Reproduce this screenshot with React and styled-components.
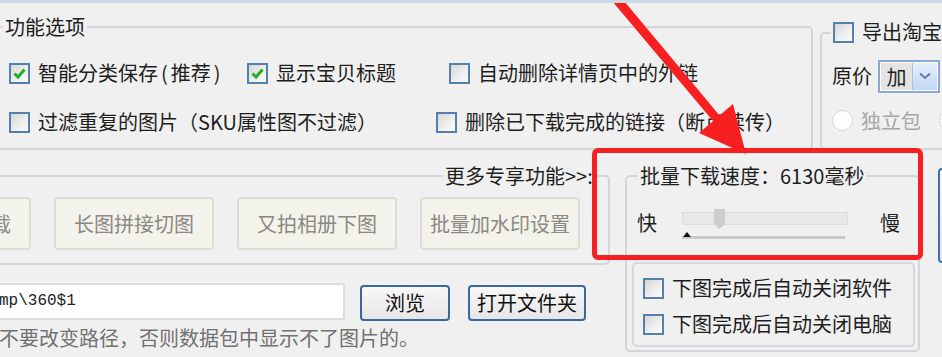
import styled, { createGlobalStyle } from 'styled-components'

const GlobalStyle = createGlobalStyle`
  html, body {
    margin: 0;
    padding: 0;
    background: #f0f0f0;
  }
  body {
    font-family: "Noto Sans CJK SC", "Noto Sans", sans-serif;
  }
`

const Page = styled.div`
  position: relative;
  width: 942px;
  height: 357px;
  box-sizing: border-box;
  overflow: hidden;
  background: #f0f0f0;
  border-top: 3px solid #cddae7;
  color: #1e1e1e;
  font-size: 20px;
  line-height: 22px;
`

const TopBand = styled.div`
  display: flex;
  align-items: flex-start;
  gap: 7px;
  margin-left: -4px;
`

const LowerBand = styled.div`
  display: flex;
  align-items: flex-start;
  margin-top: 15px;
`

const Group = styled.fieldset`
  margin: 0;
  min-width: 0;
  box-sizing: border-box;
  flex-shrink: 0;
  border: 2px solid #d6d4da;
  border-radius: 5px;
`

const Legend = styled.legend`
  padding: 0 2px;
  margin-left: ${p => p.$ml || 0}px;
  line-height: 22px;
  white-space: nowrap;
`

const OptionsGroup = styled(Group)`
  margin-top: 13px;
  width: 817px;
  padding: 24px 0 15px 11px;
`

const ExportGroup = styled(Group)`
  margin-top: 18px;
  width: 200px;
  height: 129px;
  padding: 14px 0 0 10px;
`

const MoreGroup = styled(Group)`
  padding: 10px 28px 13px 0;
`

const SpeedGroup = styled(Group)`
  margin-left: 15px;
  width: 295px;
  padding: 0 3px 3px 5px;
`

const LeftColumn = styled.div`
  margin-left: -4px;
  width: 614px;
  flex-shrink: 0;
`

const OptionList = styled.div`
  display: flex;
  flex-direction: column;
  gap: ${p => p.$gap}px;
`

const OptionRow = styled.div`
  display: flex;
  align-items: center;
  height: 22px;
`

const CheckItem = styled.label`
  display: flex;
  align-items: center;
  gap: 8px;
  flex-shrink: 0;
  width: ${p => (p.$w ? `${p.$w}px` : 'auto')};
  white-space: nowrap;
`

const Paren = styled.span`
  padding: 0 3px;
`

const Box = styled.span`
  display: inline-flex;
  align-items: center;
  justify-content: center;
  width: 21px;
  height: 21px;
  box-sizing: border-box;
  border: 2px solid #5580ab;
  background: linear-gradient(135deg, #d6d6d6 0%, #eeeeee 55%, #fbfbfb 100%);
  flex-shrink: 0;
`

function Checkbox({ checked }) {
  return (
    <Box>
      {checked && (
        <svg width="15" height="15" viewBox="0 0 15 15">
          <path d="M2.5 7.5 L6 11 L12.5 3.5" fill="none" stroke="#1fae24" strokeWidth="3" />
        </svg>
      )}
    </Box>
  )
}

const LegendCheck = styled.span`
  display: inline-flex;
  align-items: center;
  gap: 8px;
`

const PriceRow = styled.div`
  display: flex;
  align-items: center;
  height: 33px;
`

const Select = styled.div`
  display: flex;
  margin-left: 6px;
  width: 62px;
  height: 33px;
  box-sizing: border-box;
  border: 2px solid #8aaad3;
  background: #fff;
  padding: 1px;
`

const SelectValue = styled.span`
  width: 31px;
  background: #e3e3e3;
  text-align: center;
  line-height: 27px;
`

const SelectArrow = styled.span`
  flex: 1;
  display: flex;
  align-items: center;
  justify-content: center;
  background: linear-gradient(#e4eefc, #c3d7f4);
  border-left: 1px solid #a8c2e6;
`

const RadioRow = styled.div`
  display: flex;
  align-items: center;
  margin-top: 17px;
  height: 22px;
  color: #a6a6a6;
`

const Radio = styled.span`
  width: 21px;
  height: 21px;
  box-sizing: border-box;
  border-radius: 50%;
  border: 1px solid #d6d6d6;
  background: #fff;
  margin-right: 8px;
  margin-left: ${p => p.$ml || 0}px;
  flex-shrink: 0;
`

const ToolRow = styled.div`
  display: flex;
  justify-content: flex-end;
  gap: 23px;
`

const ToolButton = styled.div`
  flex-shrink: 0;
  width: 160px;
  height: 53px;
  box-sizing: border-box;
  display: flex;
  align-items: center;
  justify-content: center;
  border: 2px solid #dedcd4;
  border-radius: 4px;
  background: #f4f3eb;
  color: #8a8982;
`

const PathRow = styled.div`
  display: flex;
  align-items: flex-start;
  margin-top: 18px;
`

const PathBox = styled.div`
  margin-left: -51px;
  width: 400px;
  height: 37px;
  box-sizing: border-box;
  border: 2px solid #dddddd;
  background: #fff;
  padding-left: 4px;
  font-family: "Liberation Mono", "DejaVu Sans Mono", monospace;
  font-size: 16px;
  line-height: 33px;
  color: #222;
  white-space: nowrap;
`

const PushButton = styled.div`
  margin-top: 2px;
  margin-left: ${p => p.$ml}px;
  width: ${p => p.$w}px;
  height: 36px;
  box-sizing: border-box;
  display: flex;
  align-items: center;
  justify-content: center;
  border: 2px solid #3a679c;
  border-radius: 4px;
  background: linear-gradient(#f8f8f8, #e6e6e6);
  color: #111;
`

const Hint = styled.div`
  margin-top: 6px;
  margin-left: -17px;
  color: #717171;
  white-space: nowrap;
`

const SliderRow = styled.div`
  display: flex;
  align-items: flex-start;
  margin-top: 25px;
  padding-left: 5px;
`

const SpeedLabel = styled.span`
  width: 20px;
  margin-left: ${p => p.$ml || 0}px;
  line-height: 22px;
`

const Slider = styled.div`
  margin-left: 25px;
  width: 166px;
`

const Track = styled.div`
  position: relative;
  height: 13px;
  box-sizing: border-box;
  background: #e8e8e8;
  border: 1px solid #dcdcdc;
`

const Thumb = styled.div`
  position: absolute;
  left: 31px;
  top: -4px;
  width: 11px;
  height: 20px;
  background: #cdcdcd;
  clip-path: polygon(0 0, 100% 0, 100% 75%, 50% 100%, 0 75%);
`

const Ticks = styled.div`
  position: relative;
  margin-top: 11px;
  width: 163px;
  height: 3px;
  background: #c9c9c9;
  &::before {
    content: '';
    position: absolute;
    left: 1px;
    top: -4px;
    border-left: 4px solid transparent;
    border-right: 4px solid transparent;
    border-bottom: 5px solid #111;
  }
`

const InnerBox = styled.div`
  margin-top: 23px;
  height: 85px;
  box-sizing: border-box;
  border: 2px solid #d8d6db;
  border-radius: 5px;
  padding: 13px 0 0 9px;
`

const SideButton = styled.div`
  flex-shrink: 0;
  margin-left: 18px;
  margin-top: 3px;
  width: 40px;
  height: 95px;
  box-sizing: border-box;
  border: 2px solid #3d6fa8;
  border-radius: 4px;
  background: linear-gradient(#f8f8f8, #e6e6e6);
`

const Highlight = styled.div`
  position: absolute;
  left: 592px;
  top: 145px;
  width: 331px;
  height: 112px;
  box-sizing: border-box;
  border: 5px solid #f71f1f;
  border-radius: 6px;
  pointer-events: none;
`

const ArrowLayer = styled.svg`
  position: absolute;
  left: 0;
  top: -3px;
  pointer-events: none;
`

export default function App() {
  return (
    <>
      <GlobalStyle />
      <Page>
        <TopBand>
          <OptionsGroup>
            <Legend $ml={-6}>功能选项</Legend>
            <OptionList $gap={27}>
              <OptionRow>
                <CheckItem $w={238}><Checkbox checked /><span>智能分类保存<Paren>(</Paren>推荐<Paren>)</Paren></span></CheckItem>
                <CheckItem $w={202}><Checkbox checked />显示宝贝标题</CheckItem>
                <CheckItem><Checkbox />自动删除详情页中的外链</CheckItem>
              </OptionRow>
              <OptionRow>
                <CheckItem $w={427}><Checkbox />过滤重复的图片（SKU属性图不过滤）</CheckItem>
                <CheckItem><Checkbox />删除已下载完成的链接（断点续传）</CheckItem>
              </OptionRow>
            </OptionList>
          </OptionsGroup>
          <ExportGroup>
            <Legend $ml={-1}>
              <LegendCheck><Checkbox />导出淘宝数据包</LegendCheck>
            </Legend>
            <PriceRow>
              原价
              <Select>
                <SelectValue>加</SelectValue>
                <SelectArrow>
                  <svg width="12" height="8" viewBox="0 0 12 8">
                    <path d="M1 1.5 L6 6 L11 1.5" fill="none" stroke="#5a7fb0" strokeWidth="2" />
                  </svg>
                </SelectArrow>
              </Select>
            </PriceRow>
            <RadioRow>
              <Radio />独立包
              <Radio $ml={18} />合并
            </RadioRow>
          </ExportGroup>
        </TopBand>

        <LowerBand>
          <LeftColumn>
            <MoreGroup>
              <Legend $ml={445}>更多专享功能&gt;&gt;:</Legend>
              <ToolRow>
                <ToolButton>批量视频下载</ToolButton>
                <ToolButton>长图拼接切图</ToolButton>
                <ToolButton>又拍相册下图</ToolButton>
                <ToolButton>批量加水印设置</ToolButton>
              </ToolRow>
            </MoreGroup>
            <PathRow>
              <PathBox>D:\temp\360$1</PathBox>
              <PushButton $ml={15} $w={90}>浏览</PushButton>
              <PushButton $ml={18} $w={118}>打开文件夹</PushButton>
            </PathRow>
            <Hint>请不要改变路径，否则数据包中显示不了图片的。</Hint>
          </LeftColumn>

          <SpeedGroup>
            <Legend $ml={6}>批量下载速度：6130毫秒</Legend>
            <SliderRow>
              <SpeedLabel>快</SpeedLabel>
              <Slider>
                <Track><Thumb /></Track>
                <Ticks />
              </Slider>
              <SpeedLabel $ml={32}>慢</SpeedLabel>
            </SliderRow>
            <InnerBox>
              <OptionList $gap={14}>
                <OptionRow>
                  <CheckItem><Checkbox />下图完成后自动关闭软件</CheckItem>
                </OptionRow>
                <OptionRow>
                  <CheckItem><Checkbox />下图完成后自动关闭电脑</CheckItem>
                </OptionRow>
              </OptionList>
            </InnerBox>
          </SpeedGroup>

          <SideButton />
        </LowerBand>

        <Highlight />
        <ArrowLayer width="942" height="357" viewBox="0 0 942 357">
          <polygon points="614,-11 607,-5 713,121 720,116" fill="#f71f1f" />
          <polygon points="746,154 733,104 699,133" fill="#f71f1f" />
        </ArrowLayer>
      </Page>
    </>
  )
}
